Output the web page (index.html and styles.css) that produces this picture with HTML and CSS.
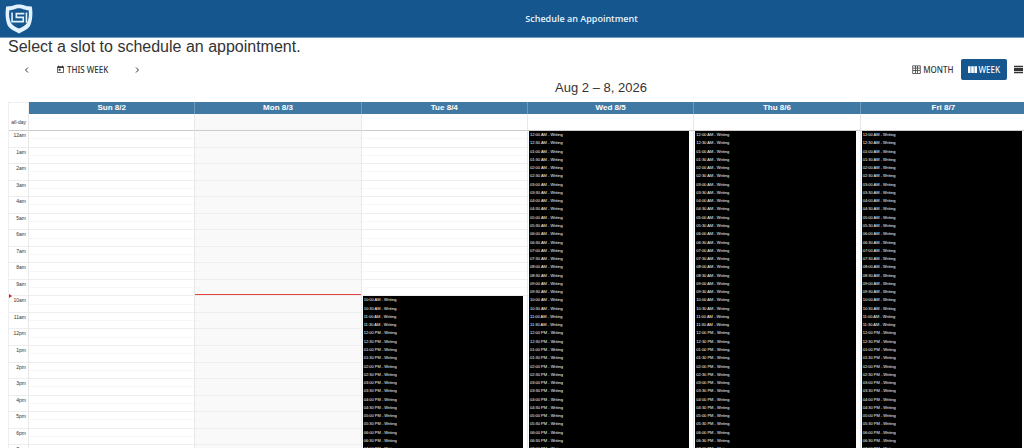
FILE: index.html
```html
<!DOCTYPE html>
<html lang="en">
<head>
<meta charset="utf-8">
<meta name="viewport" content="width=device-width, initial-scale=1">
<title>Schedule an Appointment</title>
<link rel="stylesheet" href="styles.css">
</head>
<body>
<header class="topbar">
  <svg class="logo" viewBox="0 0 28 30" role="img" aria-label="LSI">
    <path class="logo-shield" d="M14 1.500C10 1.300 8.500 3.500 2 3.300C0.800 10 1.500 18 4 22C6 25 10 26 14 28.500C18 26 22 25 24 22C26.500 18 27.200 10 26 3.300C19.500 3.500 18 1.300 14 1.500Z"/>
    <path class="logo-field" d="M14 5C11 5 9.500 6.700 5 6.900C4.300 11 4.800 15.500 6.500 18.700C8 21.300 11 22.500 14 24C17 22.500 20 21.300 21.500 18.700C23.200 15.500 23.700 11 23 6.900C18.500 6.700 17 5 14 5Z"/>
    <path class="logo-mark" d="M7.500 9V17.500H18V13.500H11.500V10H19M21 9V18.500"/>
  </svg>
  <div class="topbar-title">Schedule an Appointment</div>
</header>
<main class="main">
  <h1 class="heading">Select a slot to schedule an appointment.</h1>
  <div class="toolbar">
    <div class="nav">
      <button class="tool" aria-label="Previous week"><svg class="chevron" viewBox="0 0 8 8"><path d="M5 1.500L2.500 4L5 6.500"/></svg></button>
      <button class="tool"><svg class="icon" viewBox="0 0 24 24"><path d="M19 3h-1V1h-2v2H8V1H6v2H5c-1.100 0-2 .9-2 2v14c0 1.100.9 2 2 2h14c1.100 0 2-.9 2-2V5c0-1.100-.9-2-2-2zm0 16H5V8h14v11zM7 10h5v5H7z"/></svg>THIS WEEK</button>
      <button class="tool" aria-label="Next week"><svg class="chevron" viewBox="0 0 8 8"><path d="M3 1.500L5.500 4L3 6.500"/></svg></button>
    </div>
    <div class="views">
      <button class="tool"><svg class="icon" viewBox="0 0 24 24"><path fill-rule="evenodd" d="M1 1h22v22H1zM3 3v4h5V3zM10 3v4h4V3zM16 3v4h5V3zM3 9v5h5V9zM10 9v5h4V9zM16 9v5h5V9zM3 16v5h5v-5zM10 16v5h4v-5zM16 16v5h5v-5z"/></svg>MONTH</button>
      <button class="tool tool-active" aria-pressed="true"><svg class="icon" viewBox="0 0 24 24"><path d="M0 3h7v18H0zM8.500 3h7v18h-7zM17 3h7v18h-7z"/></svg>WEEK</button>
      <button class="tool" aria-label="Day"><svg class="icon" viewBox="0 0 24 24"><path d="M0 2h24v4H0zM0 8h24v8H0zM0 18h24v4H0z"/></svg></button>
    </div>
  </div>
  <h2 class="range">Aug 2 – 8, 2026</h2>
  <section class="calendar" id="calendar" aria-label="Week"></section>
</main>
<script src="script.js"></script>
</body>
</html>
```
FILE: styles.css
```css
* { box-sizing: border-box; }
body {
  display: flex;
  flex-direction: column;
  height: 100vh;
  margin: 0;
  overflow: hidden;
  background: #fff;
  color: #333;
  font-family: "Liberation Sans", Arial, sans-serif;
}
.topbar {
  display: flex;
  flex: none;
  align-items: center;
  height: 38px;
  padding-left: 4px;
  background: #14568d;
  border-bottom: 1px solid #6f9dc4;
}
.logo { width: 30px; height: 32px; flex: none; }
.logo-shield { fill: #e2f3ff; }
.logo-field { fill: #14568d; }
.logo-mark { fill: none; stroke: #e2f3ff; stroke-width: 1.500; }
.topbar-title {
  flex: 1;
  padding-left: 105px;
  text-align: center;
  color: #e8f4fc;
  font: 600 9px/12px "Open Sans", sans-serif;
}
.main {
  display: flex;
  flex: 1;
  flex-direction: column;
  min-height: 0;
  padding-left: 8px;
}
.heading { margin: 0; font-size: 16px; font-weight: 400; line-height: 18px; }
.toolbar {
  display: flex;
  justify-content: space-between;
  padding-top: 3px;
}
.nav { display: flex; gap: 11px; padding-left: 8px; }
.views { display: flex; margin-right: -6px; }
.tool {
  display: flex;
  align-items: center;
  gap: 2px;
  height: 21px;
  padding: 0 7px;
  border: 0;
  border-radius: 2px;
  background: none;
  color: #333;
  font: 500 8px/12px "Noto Sans", sans-serif;
}
.tool-active { background: #14568d; color: #fff; }
.icon { width: 9px; height: 9px; fill: currentColor; }
.chevron { width: 8px; height: 8px; fill: none; stroke: currentColor; }
.range {
  margin: 0;
  padding: 0 0 6px 170px;
  text-align: center;
  font-size: 13px;
  font-weight: 400;
  line-height: 16px;
}
.calendar {
  display: grid;
  flex: 1;
  grid-template-columns: 20px repeat(6, 1fr);
  grid-template-rows: 12px 17px 397px;
  min-height: 0;
  margin-right: -3px;
  overflow: hidden;
  border-left: 1px solid #eee;
}
.corner { border-top: 1px solid #eee; border-right: 1px solid #eee; }
.day-name {
  background: #4179a5;
  border-right: 1px solid #6d9abd;
  color: #fff;
  text-align: center;
  font-size: 8px;
  font-weight: 700;
  line-height: 12px;
}
.all-day {
  border-right: 1px solid #e8e8e8;
  border-bottom: 1px solid #ccc;
  padding-right: 2px;
  text-align: right;
  font-size: 5px;
  line-height: 16px;
}
.hours, .day {
  position: relative;
  display: grid;
  min-height: 0;
  border-right: 1px solid #e8e8e8;
}
.hours { grid-template-rows: repeat(24, 1fr); }
.day { grid-template-rows: repeat(48, 1fr); }
.hour {
  padding-right: 2px;
  border-bottom: 1px solid #eee;
  text-align: right;
  font-size: 5px;
  line-height: 8px;
}
.slot { border-bottom: 1px solid #f7f7f7; }
.slot-end { border-bottom-color: #eee; }
.today { background: #f9f9f9; }
.event {
  display: flex;
  margin: 0 4px 0 1px;
  padding: 1px 1px 0;
  border: 0;
  background: #000;
  color: #fff;
  font: 4px/5px "Liberation Sans", Arial, sans-serif;
}
.now-line, .now-arrow { position: absolute; left: 0; top: 41%; }
.now-line { right: 0; height: 1px; background: #e0443e; }
.now-arrow {
  border: 2px solid transparent;
  border-left: 3px solid #d02020;
}
```
FILE: script.js
```js
const calendar = document.getElementById('calendar');
const days = ['Sun 8/2', 'Mon 8/3', 'Tue 8/4', 'Wed 8/5', 'Thu 8/6', 'Fri 8/7'];
const todayIndex = 1;
// First bookable half-hour slot of each day; 48 means none.
const firstOpen = [48, 48, 20, 0, 0, 0];

function add(parent, tag, className, text) {
  const el = document.createElement(tag);
  el.className = className;
  if (text) el.textContent = text;
  parent.append(el);
  return el;
}

function slotTime(slot) {
  const hour = Math.floor(slot / 2);
  const shown = String(hour % 12 || 12).padStart(2, '0');
  return `${shown}:${slot % 2 ? '30' : '00'} ${hour < 12 ? 'AM' : 'PM'}`;
}

add(calendar, 'div', 'corner');
days.forEach(name => add(calendar, 'div', 'day-name', name));
add(calendar, 'div', 'all-day', 'all-day');
days.forEach((name, i) => add(calendar, 'div', i === todayIndex ? 'all-day today' : 'all-day'));

const hours = add(calendar, 'div', 'hours');
for (let h = 0; h < 24; h++) {
  add(hours, 'div', 'hour', `${h % 12 || 12}${h < 12 ? 'am' : 'pm'}`);
}
add(hours, 'span', 'now-arrow');

days.forEach((name, i) => {
  const day = add(calendar, 'div', i === todayIndex ? 'day today' : 'day');
  for (let s = 0; s < 48; s++) {
    if (s < firstOpen[i]) {
      add(day, 'div', s % 2 ? 'slot slot-end' : 'slot');
    } else {
      add(day, 'button', 'event', `${slotTime(s)} - Writing`);
    }
  }
  if (i === todayIndex) add(day, 'span', 'now-line');
});
```
